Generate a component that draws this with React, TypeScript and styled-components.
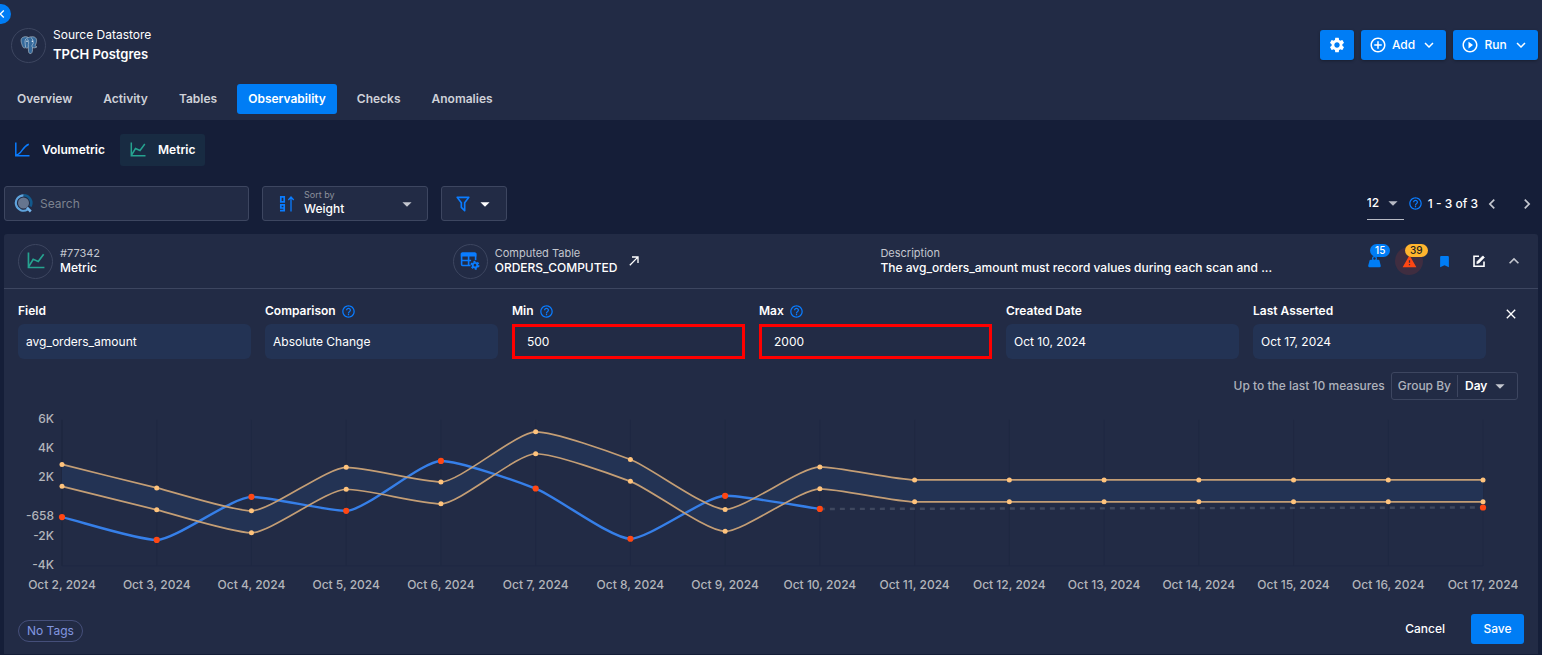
import React, { useEffect, useRef, useState } from "react";
import styled, { createGlobalStyle, css } from "styled-components";
import {
  MdAddCircleOutline,
  MdBookmark,
  MdClose,
  MdHelpOutline,
  MdPlayCircleOutline,
  MdSettings,
  MdWarning,
} from "react-icons/md";

const c = {
  page: "#151e38",
  panel: "#222b45",
  field: "#233354",
  line: "#3d4660",
  blue: "#007df5",
  iconBlue: "#0a7cff",
  teal: "#26a390",
  text: "#ffffff",
  soft: "#c4c7cf",
  muted: "#aeb2bc",
  sand: "#ffc37c",
  red: "#ff4713",
};

const GlobalStyle = createGlobalStyle`
  *, *::before, *::after { box-sizing: border-box; }
  body {
    margin: 0;
    background: ${c.page};
    color: ${c.text};
    font: 500 12px/16px Inter, "Liberation Sans", sans-serif;
    overflow-x: hidden;
  }
  button, input, select { font: inherit; color: inherit; }
  button { cursor: pointer; }
  svg { display: block; flex: none; }
`;

/* ---------- icons ---------- */

const paths = {
  chevronDown: "M7.41,8.58L12,13.17L16.59,8.58L18,10L12,16L6,10L7.41,8.58Z",
  chevronUp: "M7.41,15.41L12,10.83L16.59,15.41L18,14L12,8L6,14L7.41,15.41Z",
  chevronLeft: "M15.41,16.58L10.83,12L15.41,7.41L14,6L8,12L14,18L15.41,16.58Z",
  chevronRight: "M8.59,16.58L13.17,12L8.59,7.41L10,6L16,12L10,18L8.59,16.58Z",
  caret: "M7,10L12,15L17,10H7Z",
  arrowOut: "M5,17.59L15.59,7H9V5H19V15H17V8.41L6.41,19L5,17.59Z",
  filter:
    "M15,19.88C15.04,20.18 14.94,20.5 14.71,20.71C14.32,21.1 13.69,21.1 13.3,20.71L9.29,16.7C9.06,16.47 8.96,16.16 9,15.87V10.75L4.21,4.62C3.87,4.19 3.95,3.56 4.38,3.22C4.57,3.08 4.78,3 5,3V3H19V3C19.22,3 19.43,3.08 19.62,3.22C20.05,3.56 20.13,4.19 19.79,4.62L15,10.75V19.88M7.04,5L11,10.06V15.58L13,17.58V10.05L16.96,5H7.04Z",
  weight:
    "M12,3A4,4 0 0,1 16,7C16,7.73 15.81,8.41 15.46,9H18C18.95,9 19.75,9.67 19.95,10.56C21.96,18.57 22,18.78 22,19A2,2 0 0,1 20,21H4A2,2 0 0,1 2,19C2,18.78 2.04,18.57 4.05,10.56C4.25,9.67 5.05,9 6,9H8.54C8.19,8.41 8,7.73 8,7A4,4 0 0,1 12,3M12,5A2,2 0 0,0 10,7A2,2 0 0,0 12,9A2,2 0 0,0 14,7A2,2 0 0,0 12,5Z",
};

function Glyph({ name, size = 20, color = "currentColor" }: { name: keyof typeof paths; size?: number; color?: string }) {
  return (
    <svg width={size} height={size} viewBox="0 0 24 24" fill={color} aria-hidden="true">
      <path d={paths[name]} />
    </svg>
  );
}

function VolumetricIcon() {
  return (
    <svg width="16" height="16" viewBox="0 0 16 16" fill="none" stroke={c.iconBlue} strokeWidth="1.500" aria-hidden="true">
      <path d="M1.800 .5v13.200h13.700" />
      <path d="M2 13C8 12.500 8 4.500 14.800 2.200" />
    </svg>
  );
}

function MetricIcon({ size = 16 }: { size?: number }) {
  return (
    <svg width={size} height={size} viewBox="0 0 16 16" fill="none" stroke={c.teal} strokeWidth="1.500" aria-hidden="true">
      <path d="M1.300 .5v13.300h14.200" />
      <path d="M1.500 13L5.500 6.500L10 8.500L14.800 2" />
    </svg>
  );
}

function TableCogIcon() {
  return (
    <svg width="20" height="20" viewBox="0 0 20 20" aria-hidden="true">
      <g fill="none" stroke={c.iconBlue} strokeWidth="1.600">
        <path d="M10.500 14.500H2.600a1 1 0 0 1-1-1V3h14v6M1.600 9.500h9.500M8.600 4v10.500" />
      </g>
      <path d="M2.400 1.200h12.400a1.600 1.600 0 0 1 1.600 1.600V5.400H.8V2.800a1.600 1.600 0 0 1 1.600-1.600z" fill={c.iconBlue} />
      <circle cx="15" cy="14.200" r="2.300" fill="none" stroke={c.iconBlue} strokeWidth="1.900" />
      <circle cx="15" cy="14.200" r="3.700" fill="none" stroke={c.iconBlue} strokeWidth="1.600" strokeDasharray="2 1.875" />
    </svg>
  );
}

function SortNumericIcon() {
  return (
    <svg width="16" height="18" viewBox="0 0 16 18" fill="none" stroke={c.iconBlue} strokeWidth="1.700" aria-hidden="true">
      <path d="M1.800 1.800h3.400v5H1.800z" />
      <path d="M5.200 13H1.800V9.800h3.400v5.800H1" />
      <path d="M12 16.500V2.500M9.300 5L12 2l2.700 3" strokeWidth="1.300" />
    </svg>
  );
}

function SearchLogo() {
  return (
    <svg width="20" height="20" viewBox="0 0 20 20" fill="none" aria-hidden="true">
      <circle cx="9.500" cy="9" r="5.500" fill="#66758f" />
      <path d="M9.500 1.300A7.700 7.700 0 0 1 16.400 12.500" stroke="#12598c" strokeWidth="2.600" />
      <path d="M9.500 1.300A7.700 7.700 0 1 0 13.500 15.600" stroke="#5fa3dc" strokeWidth="2.200" />
      <path d="M13 13.700L16.800 17.500" stroke="#74b3ea" strokeWidth="2.600" />
    </svg>
  );
}

function PostgresLogo() {
  return (
    <svg width="18" height="19" viewBox="0 0 18 19" aria-hidden="true">
      <path
        d="M3.800 1C6 .2 7.400 1 8.500 1.500C10 .8 12.500.4 14.600 1.200C17.200 2.500 17 5.500 15.400 9.200C15 10.300 15.600 10.600 17 10.700C15.800 12 14 12 12.500 11.500C12.600 14 12.500 16.600 11.200 17.400C9.600 18 8.700 17 8.500 15.300L8.300 11.500C7 12.300 6 12.200 5.200 11.500C3.500 13 2.500 10.500 1.600 7.500C.6 4 1 1.800 3.800 1Z"
        fill="#34699b"
        stroke="#a9b6c3"
        strokeWidth=".7"
      />
      <path d="M5.600 11.200C5.800 9.500 4.800 8 5 6C5.200 3.500 5.600 2 8.400 1.700M8.300 11.500V8.500C9 7 8.800 4 7.400 3.200M12.500 11.500C11.500 10 12 9 13 7.800C13.800 6 12.800 2.500 10.800 1.400" fill="none" stroke="#b9c9d8" strokeWidth=".7" />
      <circle cx="7" cy="5.200" r=".7" fill="#fff" />
      <circle cx="12.300" cy="5.200" r=".7" fill="#fff" />
    </svg>
  );
}

function EditIcon() {
  return (
    <svg width="14" height="14" viewBox="0 0 14 14" fill="none" stroke="#fff" strokeWidth="1.600" aria-hidden="true">
      <path d="M7 2.300H2v10h10V7.500" />
      <path d="M4.800 9.500l.4-2L10.800 1.900l1.500 1.500L6.800 9z" fill="#fff" strokeWidth=".8" />
    </svg>
  );
}

/* ---------- header ---------- */

const Header = styled.header`
  position: relative;
  background: ${c.panel};
  padding: 28px 4px 6px;
`;

const CollapseButton = styled.button`
  position: absolute;
  top: 4px;
  left: -9px;
  width: 20px;
  height: 20px;
  padding: 0 0 0 2px;
  border: 0;
  border-radius: 50%;
  background: ${c.blue};
  display: flex;
  align-items: center;
  justify-content: center;
`;

const TitleRow = styled.div`
  display: flex;
  align-items: center;
  justify-content: space-between;
  height: 34px;
  padding-left: 7px;
`;

const Identity = styled.div`
  display: flex;
  align-items: center;
  gap: 7px;
`;

const RoundFrame = styled.span`
  display: flex;
  align-items: center;
  justify-content: center;
  flex: none;
  width: 35px;
  height: 35px;
  border: 1px solid ${c.line};
  border-radius: 50%;
`;

const SourceLabel = styled.div`
  font-size: 12px;
  line-height: 18px;
  font-weight: 400;
`;

const SourceName = styled.h1`
  margin: 0;
  font-size: 13px;
  line-height: 20px;
  font-weight: 600;
`;

const HeaderActions = styled.div`
  display: flex;
  gap: 7px;
`;

const PrimaryButton = styled.button<{ $icon?: boolean }>`
  display: flex;
  align-items: center;
  justify-content: center;
  gap: 5px;
  height: 30px;
  width: ${(p) => (p.$icon ? 34 : 85)}px;
  padding: 0;
  border: 0;
  border-radius: 3px;
  background: ${c.blue};
  box-shadow: 0 1px 3px rgba(0, 0, 0, 0.3);
`;

const Tabs = styled.nav`
  display: flex;
  gap: 9px;
  margin: 22px 0 0 2px;
`;

const Tab = styled.a<{ $active?: boolean }>`
  padding: 0 11px;
  line-height: 30px;
  border-radius: 3px;
  font-weight: 600;
  text-decoration: none;
  color: ${(p) => (p.$active ? c.text : "#cfd1d8")};
  background: ${(p) => (p.$active ? c.blue : "transparent")};
`;

/* ---------- toolbar ---------- */

const Main = styled.main`
  padding: 14px 4px 0;
`;

const Kinds = styled.div`
  display: flex;
  gap: 5px;
`;

const KindButton = styled.button<{ $active?: boolean }>`
  display: flex;
  align-items: center;
  gap: 12px;
  height: 32px;
  padding: 0 10px;
  border: 0;
  border-radius: 3px;
  font-weight: 600;
  background: ${(p) => (p.$active ? "#182b42" : "transparent")};
`;

const Toolbar = styled.div`
  display: flex;
  align-items: center;
  gap: 13px;
  margin: 20px 0 13px;
`;

const framed = css`
  display: flex;
  align-items: center;
  height: 35px;
  border: 1px solid ${c.line};
  border-radius: 3px;
  background: ${c.panel};
`;

const SearchBox = styled.label`
  ${framed}
  width: 245px;
  padding: 0 9px;
  gap: 6px;
  input {
    flex: 1;
    min-width: 0;
    border: 0;
    outline: 0;
    padding: 0;
    background: none;
    font-weight: 400;
  }
  input::placeholder { color: #7c828f; }
`;

const SelectWrap = styled.span<{ $width: number }>`
  display: grid;
  align-items: center;
  width: ${(p) => p.$width}px;
  > * { grid-area: 1 / 1; }
  > svg { justify-self: end; pointer-events: none; }
  select {
    appearance: none;
    width: 100%;
    padding: 0;
    border: 0;
    outline: 0;
    background: none;
  }
  option { color: #111; }
`;

const SortBox = styled.div`
  ${framed}
  width: 166px;
  padding: 0 9px 0 16px;
  gap: 9px;
`;

const SortStack = styled.div`
  display: grid;
  flex: 1;
  > * { grid-area: 1 / 1; }
  label {
    align-self: start;
    font-size: 9px;
    line-height: 12px;
    font-weight: 400;
    color: #8b909c;
  }
  select { padding-top: 11px; line-height: 16px; height: 30px; }
`;

const FilterButton = styled.button`
  ${framed}
  width: 66px;
  padding: 0 10px 0 11px;
  justify-content: space-between;
`;

const Pager = styled.div`
  display: flex;
  align-items: center;
  margin-left: auto;
  padding-right: 1px;
`;

const PageSize = styled.div`
  width: 37px;
  height: 32px;
  display: flex;
  align-items: center;
  border-bottom: 1px solid #b7bac4;
  margin-right: 4px;
`;

const PageRange = styled.span`
  margin: 0 4px 0 5px;
`;

const IconButton = styled.button<{ $gap?: number }>`
  display: flex;
  align-items: center;
  justify-content: center;
  padding: 0;
  border: 0;
  background: none;
  margin-left: ${(p) => p.$gap ?? 0}px;
`;

/* ---------- card ---------- */

const Card = styled.section`
  background: ${c.panel};
  border-radius: 3px 3px 0 0;
`;

const CardHeader = styled.div`
  display: grid;
  grid-template-columns: 436fr 429fr 481fr auto;
  align-items: center;
  height: 55px;
  padding: 0 10px 0 14px;
  border-bottom: 1px solid ${c.line};
`;

const Summary = styled.div`
  display: flex;
  align-items: center;
  gap: 7px;
  min-width: 0;
`;

const SummaryLabel = styled.div`
  font-size: 11px;
  line-height: 14px;
  font-weight: 400;
  color: ${c.soft};
`;

const SummaryValue = styled.div`
  line-height: 16px;
  white-space: nowrap;
`;

const OpenLink = styled.a`
  color: inherit;
  margin-left: 2px;
`;

const CardActions = styled.div`
  display: flex;
  align-items: center;
  gap: 7px;
`;

const Signal = styled.span<{ $halo?: boolean }>`
  position: relative;
  display: flex;
  align-items: center;
  justify-content: center;
  width: 28px;
  height: 28px;
  padding: 0;
  border: 0;
  border-radius: 50%;
  background: ${(p) => (p.$halo ? "#3f2d40" : "transparent")};
`;

const Badge = styled.span<{ $tone: string; $ink: string }>`
  position: absolute;
  top: -3px;
  left: 10px;
  min-width: 20px;
  padding: 0 5px;
  border-radius: 7px;
  font-size: 10px;
  line-height: 13px;
  text-align: center;
  background: ${(p) => p.$tone};
  color: ${(p) => p.$ink};
`;

const CardBody = styled.div`
  padding: 14px 14px 10px;
`;

const FieldRow = styled.div`
  display: flex;
  align-items: flex-start;
  gap: 17px;
`;

const Fields = styled.div`
  flex: 1;
  display: grid;
  grid-template-columns: repeat(6, 1fr);
  gap: 14px;
`;

const FieldLabel = styled.div`
  display: flex;
  align-items: center;
  gap: 5px;
  height: 16px;
  margin-bottom: 5px;
  font-weight: 600;
`;

const FieldValue = styled.div`
  height: 35px;
  padding: 0 8px;
  border-radius: 6px;
  background: ${c.field};
  font-weight: 400;
  line-height: 36px;
`;

const FieldInput = styled.input`
  width: 100%;
  height: 35px;
  padding: 0 12px;
  border: 3px solid #ff0000;
  outline: 0;
  background: none;
  font-weight: 400;
  line-height: 16px;
`;

const CloseSlot = styled.div`
  padding: 3px 0 0;
  width: 21px;
`;

const GroupRow = styled.div`
  display: flex;
  align-items: center;
  justify-content: flex-end;
  gap: 6px;
  margin: 13px 6px 4px 0;
  color: ${c.muted};
`;

const GroupBox = styled.div`
  display: flex;
  align-items: center;
  gap: 6px;
  height: 28px;
  padding: 0 6px;
  border: 1px solid ${c.line};
  border-radius: 3px;
  ${SelectWrap} {
    color: #fff;
    border-left: 1px solid ${c.line};
    padding-left: 7px;
    font-weight: 600;
  }
`;

const ChartFrame = styled.div`
  height: 195px;
  margin-right: 6px;
  overflow: hidden;
  text {
    fill: #b3b5bb;
    font-size: 12px;
    font-weight: 500;
  }
`;

const Footer = styled.div`
  display: flex;
  align-items: center;
  justify-content: space-between;
  height: 30px;
  margin-top: 15px;
`;

const TagPill = styled.span`
  padding: 0 8px;
  border: 1px solid #454f7a;
  border-radius: 11px;
  line-height: 20px;
  margin-top: 3px;
  font-weight: 400;
  color: #8397e0;
`;

const FooterActions = styled.div`
  display: flex;
`;

const FooterButton = styled.button<{ $primary?: boolean }>`
  height: 30px;
  padding: 0 12px;
  min-width: 53px;
  margin-left: 14px;
  border: 0;
  border-radius: 3px;
  background: ${(p) => (p.$primary ? c.blue : "transparent")};
  font-weight: 500;
`;

/* ---------- chart ---------- */

const upper = [2.95, 1.34, -0.23, 2.75, 1.75, 5.18, 3.29, -0.13, 2.78, 1.89, 1.89, 1.89, 1.89, 1.89, 1.89, 1.89];
const measured = [-0.658, -2.22, 0.73, -0.23, 3.19, 1.3, -2.14, 0.8, -0.1];
const lastMeasure = 0;
const ticks: [number, string][] = [[6, "6K"], [4, "4K"], [2, "2K"], [-0.658, "-658"], [-2, "-2K"], [-4, "-4K"]];

type Point = [number, number];

function curve(points: Point[]) {
  const slope = (a: Point, b: Point) => (b[1] - a[1]) / (b[0] - a[0]);
  const tangents = points.map((p, i) => {
    if (i === 0) return slope(p, points[1]);
    if (i === points.length - 1) return slope(points[i - 1], p);
    const before = slope(points[i - 1], p);
    const after = slope(p, points[i + 1]);
    return before * after <= 0 ? 0 : (2 * before * after) / (before + after);
  });
  return points.slice(1).reduce((d, q, i) => {
    const p = points[i];
    const h = (q[0] - p[0]) * 0.2;
    return `${d}C${p[0] + h},${p[1] + tangents[i] * h} ${q[0] - h},${q[1] - tangents[i + 1] * h} ${q[0]},${q[1]}`;
  }, `${points[0][0]},${points[0][1]}`);
}

function MetricChart() {
  const frame = useRef<HTMLDivElement>(null);
  const [width, setWidth] = useState(1500);
  useEffect(() => {
    const node = frame.current;
    if (!node) return;
    const update = () => setWidth(node.clientWidth);
    update();
    const observer = new ResizeObserver(update);
    observer.observe(node);
    return () => observer.disconnect();
  }, []);

  const left = 44;
  const right = width - 35;
  const x = (i: number) => left + ((right - left) * i) / 15;
  const y = (v: number) => 103.5 - v * 14.6;
  const high: Point[] = upper.map((v, i) => [x(i), y(v)]);
  const low: Point[] = upper.map((v, i) => [x(i), y(v - 1.5)]);
  const line: Point[] = measured.map((v, i) => [x(i), y(v)]);
  const end: Point = [x(15), y(lastMeasure)];

  return (
    <ChartFrame ref={frame}>
      <svg width={width} height="195" role="img" aria-label="Metric values and expected range by day">
        {high.map(([px], i) => (
          <line key={i} x1={px} x2={px} y1={y(6)} y2={y(-4)} stroke={i ? "#1f2842" : "#1b243c"} />
        ))}
        <line x1={left} x2={right} y1={y(-4)} y2={y(-4)} stroke="#1f2842" />
        {ticks.map(([v, label]) => (
          <text key={label} x={left - 8} y={y(v) + 3} textAnchor="end">{label}</text>
        ))}
        {high.map(([px], i) => (
          <text key={i} x={px} y="185" textAnchor="middle">{`Oct ${i + 2}, 2024`}</text>
        ))}
        <path d={`M${curve(high)}L${curve([...low].reverse())}Z`} fill={c.field} />
        <path d={`M${curve(line)}`} fill="none" stroke="#367fe8" strokeWidth="2.400" />
        <path d={`M${line[8][0]},${line[8][1]}L${end[0]},${end[1]}`} stroke="#3f485f" strokeWidth="2.400" strokeDasharray="5 5" />
        {[high, low].map((series, s) => (
          <path key={s} d={`M${curve(series)}`} fill="none" stroke="#c49e75" strokeWidth="1.700" />
        ))}
        {[...high, ...low].map(([px, py], i) => (
          <circle key={i} cx={px} cy={py} r="2.500" fill={c.sand} />
        ))}
        {[...line, end].map(([px, py], i) => (
          <circle key={i} cx={px} cy={py} r="3.100" fill={c.red} />
        ))}
      </svg>
    </ChartFrame>
  );
}

/* ---------- page ---------- */

const tabs = ["Overview", "Activity", "Tables", "Observability", "Checks", "Anomalies"];

function Help() {
  return <MdHelpOutline size={15} color={c.iconBlue} aria-label="Help" />;
}

export default function App() {
  return (
    <>
      <GlobalStyle />
      <Header>
        <CollapseButton aria-label="Collapse sidebar"><Glyph name="chevronLeft" size={16} /></CollapseButton>
        <TitleRow>
          <Identity>
            <RoundFrame><PostgresLogo /></RoundFrame>
            <div>
              <SourceLabel>Source Datastore</SourceLabel>
              <SourceName>TPCH Postgres</SourceName>
            </div>
          </Identity>
          <HeaderActions>
            <PrimaryButton $icon aria-label="Settings"><MdSettings size={18} /></PrimaryButton>
            <PrimaryButton><MdAddCircleOutline size={18} />Add<Glyph name="chevronDown" size={18} /></PrimaryButton>
            <PrimaryButton><MdPlayCircleOutline size={18} />Run<Glyph name="chevronDown" size={18} /></PrimaryButton>
          </HeaderActions>
        </TitleRow>
        <Tabs>
          {tabs.map((t) => (
            <Tab key={t} href="#" $active={t === "Observability"}>{t}</Tab>
          ))}
        </Tabs>
      </Header>

      <Main>
        <Kinds>
          <KindButton><VolumetricIcon />Volumetric</KindButton>
          <KindButton $active><MetricIcon />Metric</KindButton>
        </Kinds>

        <Toolbar>
          <SearchBox>
            <SearchLogo />
            <input type="text" placeholder="Search" aria-label="Search" />
          </SearchBox>
          <SortBox>
            <SortNumericIcon />
            <SelectWrap $width={114}>
              <SortStack>
                <label htmlFor="sort">Sort by</label>
                <select id="sort"><option>Weight</option></select>
              </SortStack>
              <Glyph name="caret" size={22} color="#c4c7cf" />
            </SelectWrap>
          </SortBox>
          <FilterButton aria-label="Filter">
            <Glyph name="filter" color={c.iconBlue} />
            <Glyph name="caret" size={22} />
          </FilterButton>
          <Pager>
            <PageSize>
              <SelectWrap $width={37}>
                <select aria-label="Items per page"><option>12</option></select>
                <Glyph name="caret" size={22} color="#b7bac4" />
              </SelectWrap>
            </PageSize>
            <Help />
            <PageRange>1 - 3 of 3</PageRange>
            <IconButton aria-label="Previous page"><Glyph name="chevronLeft" color="#c4c7cf" /></IconButton>
            <IconButton $gap={15} aria-label="Next page"><Glyph name="chevronRight" color="#c4c7cf" /></IconButton>
          </Pager>
        </Toolbar>

        <Card>
          <CardHeader>
            <Summary>
              <RoundFrame><MetricIcon size={18} /></RoundFrame>
              <div>
                <SummaryLabel>#77342</SummaryLabel>
                <SummaryValue>Metric</SummaryValue>
              </div>
            </Summary>
            <Summary>
              <RoundFrame><TableCogIcon /></RoundFrame>
              <div>
                <SummaryLabel>Computed Table</SummaryLabel>
                <SummaryValue>ORDERS_COMPUTED</SummaryValue>
              </div>
              <OpenLink href="#" aria-label="Open table"><Glyph name="arrowOut" size={16} /></OpenLink>
            </Summary>
            <Summary>
              <div>
                <SummaryLabel>Description</SummaryLabel>
                <SummaryValue>The avg_orders_amount must record values during each scan and ...</SummaryValue>
              </div>
            </Summary>
            <CardActions>
              <Signal>
                <Glyph name="weight" size={15} color={c.blue} />
                <Badge $tone={c.blue} $ink="#fff">15</Badge>
              </Signal>
              <Signal $halo>
                <MdWarning size={15} color={c.red} />
                <Badge $tone="#ffb52e" $ink="#222">39</Badge>
              </Signal>
              <Signal as="button" aria-label="Bookmark"><MdBookmark size={15} color={c.blue} /></Signal>
              <Signal as="button" aria-label="Edit"><EditIcon /></Signal>
              <Signal as="button" aria-label="Collapse"><Glyph name="chevronUp" color="#c4c7cf" /></Signal>
            </CardActions>
          </CardHeader>

          <CardBody>
            <FieldRow>
              <Fields>
                <div><FieldLabel>Field</FieldLabel><FieldValue>avg_orders_amount</FieldValue></div>
                <div><FieldLabel>Comparison <Help /></FieldLabel><FieldValue>Absolute Change</FieldValue></div>
                <div>
                  <FieldLabel as="label" htmlFor="min">Min <Help /></FieldLabel>
                  <FieldInput id="min" defaultValue="500" />
                </div>
                <div>
                  <FieldLabel as="label" htmlFor="max">Max <Help /></FieldLabel>
                  <FieldInput id="max" defaultValue="2000" />
                </div>
                <div><FieldLabel>Created Date</FieldLabel><FieldValue>Oct 10, 2024</FieldValue></div>
                <div><FieldLabel>Last Asserted</FieldLabel><FieldValue>Oct 17, 2024</FieldValue></div>
              </Fields>
              <CloseSlot>
                <IconButton aria-label="Close"><MdClose size={16} /></IconButton>
              </CloseSlot>
            </FieldRow>

            <GroupRow>
              <span>Up to the last 10 measures</span>
              <GroupBox>
                <label htmlFor="group">Group By</label>
                <SelectWrap $width={54}>
                  <select id="group"><option>Day</option></select>
                  <Glyph name="caret" size={22} color="#c4c7cf" />
                </SelectWrap>
              </GroupBox>
            </GroupRow>

            <MetricChart />

            <Footer>
              <TagPill>No Tags</TagPill>
              <FooterActions>
                <FooterButton>Cancel</FooterButton>
                <FooterButton $primary>Save</FooterButton>
              </FooterActions>
            </Footer>
          </CardBody>
        </Card>
      </Main>
    </>
  );
}
